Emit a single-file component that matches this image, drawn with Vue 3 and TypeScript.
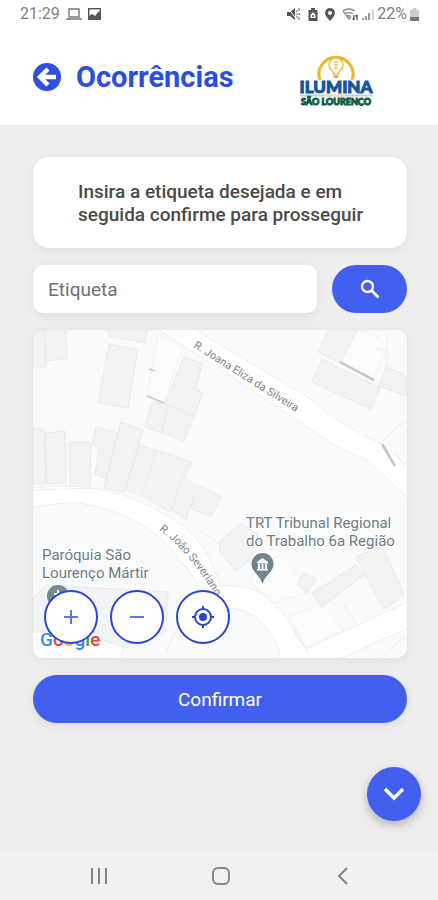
<script setup lang="ts">
import { ref } from 'vue'

const tag = ref('')

const buildings: string[] = [
  '33,330 44,330 46,367 33,367',
  '44,330 66,330 67,358 46,361',
  '108,330 147,330 145,343 109,336',
  '109,344 138,350 128,408 98,403',
  '184,357 202,364 196,389 203,393 194,416 165,404',
  '152,402 168,405 162,433 145,427',
  '168,405 194,416 184,441 162,433',
  '33,428 44,430 46,484 33,484',
  '45,433 65,431 66,483 47,484',
  '69,442 91,442 90,490 70,487',
  '96,427 118,433 106,478 95,474 99,450 92,444',
  '121,422 143,430 124,492 104,488',
  '139,445 156,450 146,497 126,490',
  '157,450 192,462 170,512 142,496',
  '182,476 197,486 186,520 172,510',
  '200,486 221,497 211,517 190,508',
  '328,330 357,330 340,363 318,352',
  '322,359 380,388 371,409 312,382',
  '386,367 406,375 406,396 379,386',
  '220,541 240,524 258,534 250,560 236,571 220,552',
  '297,585 303,573 316,579 307,593',
  '312,593 356,565 364,575 322,607',
  '356,557 382,545 404,594 384,610',
  '33,598 46,585 168,592 166,630 132,648 33,640',
]

const paleBlocks: string[] = [
  '158,334 183,346 164,403 147,396',
  '358,330 386,330 387,350 372,381 340,362',
  '262,560 284,556 308,592 270,604 250,580',
  '290,616 322,603 344,630 306,648',
]
</script>

<template>
  <div class="screen">
    <header class="top">
      <div class="status">
        <div class="status-group">
          <span>21:29</span>
          <svg width="16" height="12" viewBox="0 0 16 12" fill="none" stroke="#777" stroke-width="1.4">
            <path d="M3 1h10v8H3zM0 11h16" />
          </svg>
          <svg width="13" height="12" viewBox="0 0 13 12">
            <rect x=".7" y=".7" width="11.6" height="10.6" fill="none" stroke="#555" stroke-width="1.4" />
            <path d="M1 11V8l3-2 3 2 4-5 1 2v6z" fill="#555" />
          </svg>
        </div>
        <div class="status-group right">
          <svg width="14" height="14" viewBox="0 0 14 14" fill="#555">
            <path d="M0 5h3l5-4v12L3 9H0z" />
            <path d="M1 1l9 12" stroke="#fff" stroke-width="1" />
            <path d="M10 3v2M12 1v3M10 6v2M12.500 6v2M10 9v2M12 10v3" stroke="#888" stroke-width="1.300" />
          </svg>
          <svg class="gap" width="10" height="13" viewBox="0 0 10 13">
            <path d="M3 0h4v2h2.500v11H.5V2H3z" fill="#555" />
            <path d="M5 4l2.500 3v3h-5V7z" fill="#fff" />
            <circle cx="5" cy="8" r="1" fill="#555" />
          </svg>
          <svg class="gap" width="10" height="13" viewBox="0 0 10 13">
            <path d="M5 0a5 5 0 0 1 5 5c0 3-5 8-5 8S0 8 0 5a5 5 0 0 1 5-5z" fill="#555" />
            <circle cx="5" cy="5" r="2" fill="#fff" />
          </svg>
          <svg class="gap" width="17" height="13" viewBox="0 0 17 13" fill="none" stroke="#888" stroke-width="1.300">
            <path d="M1 3q6-4 12 0M3 6q4-3 8 0M5 8.500q2-1.500 4 0M1 3l6 8 2-2" />
            <path d="M12 7v5M10.500 10.500L12 12M15 12V7M13.500 8.500L15 7" stroke="#555" />
          </svg>
          <svg width="12" height="13" viewBox="0 0 12 13" stroke-width="1.500">
            <path d="M1 10v2M4 8v4M7 5v7" stroke="#777" />
            <path d="M11 1v11" stroke="#ccc" />
          </svg>
          <span class="battery">22%</span>
          <svg width="9" height="13" viewBox="0 0 9 13">
            <path d="M2.500 0h4v2H9v11H0V2h2.500z" fill="#ccc" />
            <path d="M0 9h9v4H0z" fill="#777" />
          </svg>
        </div>
      </div>
      <div class="title-row">
        <button class="back" type="button" aria-label="Voltar">
          <svg width="28" height="28" viewBox="0 0 28 28">
            <circle cx="14" cy="14" r="14" fill="#2d4fe3" />
            <path d="M15 6l-8 8 8 8M8 14h15" fill="none" stroke="#fff" stroke-width="4.400" />
          </svg>
        </button>
        <h1>Ocorrências</h1>
        <svg class="logo" width="76" height="58" viewBox="0 0 76 58">
          <path d="M22 32a17 17 0 1 1 32 0" fill="none" stroke="#edb52b" stroke-width="3" />
          <path d="M36 27c0-4-5-5-5-10a7 7 0 0 1 14 0c0 5-5 6-5 10z" fill="#fffdf3" stroke="#e6be57" stroke-width="1.500" />
          <path d="M36 29h4" stroke="#d9a52e" stroke-width="2" />
          <path d="M36.500 14h3M36.500 17h3M36.500 20h3" stroke="#dcae3a" stroke-width="1.500" />
          <text x="38" y="45" text-anchor="middle" class="logo-main">ILUMINA</text>
          <path d="M2 47.500h72" stroke="#b8d4dc" stroke-width="2" />
          <path d="M26 47.500h22" stroke="#eadf9b" stroke-width="2" />
          <text x="38" y="57" text-anchor="middle" class="logo-sub">SÃO LOURENÇO</text>
        </svg>
      </div>
    </header>

    <main class="content">
      <p class="message">Insira a etiqueta desejada e em seguida confirme para prosseguir</p>

      <form class="search" @submit.prevent>
        <input v-model="tag" type="text" placeholder="Etiqueta" aria-label="Etiqueta" />
        <button class="primary find" type="submit" aria-label="Buscar">
          <svg width="20" height="20" viewBox="0 0 20 20" fill="none" stroke="#fff">
            <circle cx="7.500" cy="7.500" r="5.500" stroke-width="2.300" />
            <path d="M11.500 11.500l7 7" stroke-width="2.800" />
          </svg>
        </button>
      </form>

      <section class="map" aria-label="Mapa">
        <svg class="map-art" viewBox="33 330 374 328" preserveAspectRatio="xMidYMid slice">
          <rect x="33" y="330" width="374" height="328" fill="#f9fafb" />
          <g class="pale">
            <polygon v-for="p in paleBlocks" :key="p" :points="p" />
          </g>
          <g class="building">
            <polygon v-for="p in buildings" :key="p" :points="p" />
          </g>
          <g class="road">
            <path d="M158 329L184 346L220 369L300 422Q336 449 366 459L412 502V470L380 443Q340 425 313 401Q299 391 220 345L194 329z" />
            <path d="M32 488Q78 482 120 494Q154 505 185 527Q207 545 221 586Q258 583 276 606C292 621 294 637 306 649L410 601V627L340 659H280Q279 637 256 617Q235 604 213 609Q204 590 177 556Q145 514 80 503Q56 502 32 508z" />
            <path d="M32 632Q78 632 124 647L120 659H32z" />
          </g>
          <g class="line">
            <path d="M380 443l15-14 12-8M395 450l12 22M362 330l18 9M376 348l12 4-2 20M33 490l58-2M250 583l24 20M294 628l14 25M380 659l10-10 16-12M344 605l14 22M166 652l10-22M200 530l20 15" />
          </g>
          <path d="M340 362l34 18M382 444l13 22" stroke="#c3c5c6" stroke-width="2.500" />
          <path d="M147 396l17 7M149 369l6 2" stroke="#c9cccc" stroke-width="1.500" />

          <path id="street-joana" d="M193 347L310 421" fill="none" />
          <path id="street-joao" d="M159 530Q191 552 222 607" fill="none" />
          <text class="street"><textPath href="#street-joana">R. Joana Eliza da Silveira</textPath></text>
          <text class="street"><textPath href="#street-joao">R. João Severiano</textPath></text>

          <g class="place">
            <text x="42" y="560">Paróquia São</text>
            <text x="42" y="578">Lourenço Mártir</text>
            <text x="246" y="528">TRT Tribunal Regional</text>
            <text x="246" y="546">do Trabalho 6a Região</text>
          </g>
          <circle cx="58" cy="596" r="11" fill="#768990" />
          <path d="M58 590v10M54 594h8" stroke="#fff" stroke-width="2" />
          <path d="M262.500 553a11 11 0 0 1 11 11c0 8-8 10-11 20c-3-10-11-12-11-20a11 11 0 0 1 11-11z" fill="#70858e" />
          <path d="M257 562l5.500-4 5.500 4v1.500h-11zM258 564h2v5h-2zM261.500 564h2v5h-2zM265 564h2v5h-2zM257 569h11v1.500h-11z" fill="#fff" />
        </svg>
        <div class="brand" aria-label="Google">
          <span class="b">G</span><span class="r">o</span><span class="y">o</span><span class="b">g</span><span class="g">l</span><span class="r">e</span>
        </div>
        <div class="controls">
          <button type="button" aria-label="Aproximar">
            <svg width="24" height="24" viewBox="0 0 24 24"><path d="M12 5v14M5 12h14" /></svg>
          </button>
          <button type="button" aria-label="Afastar">
            <svg width="24" height="24" viewBox="0 0 24 24"><path d="M5 12h14" /></svg>
          </button>
          <button type="button" aria-label="Minha localização">
            <svg class="strong" width="24" height="24" viewBox="0 0 24 24">
              <circle cx="12" cy="12" r="8" />
              <path d="M12 1v3M12 20v3M1 12h3M20 12h3" />
              <circle class="dot" cx="12" cy="12" r="4" />
            </svg>
          </button>
        </div>
      </section>

      <button class="primary confirm" type="button">Confirmar</button>

      <button class="primary fab" type="button" aria-label="Mostrar mais">
        <svg width="22" height="14" viewBox="0 0 22 14" fill="none" stroke="#fff" stroke-width="3.500">
          <path d="M2 2l9 9 9-9" />
        </svg>
      </button>
    </main>

    <nav class="system">
      <button type="button" aria-label="Recentes">
        <svg width="18" height="18" viewBox="0 0 18 18"><path d="M2 1v16M9 1v16M16 1v16" /></svg>
      </button>
      <button type="button" aria-label="Início">
        <svg width="18" height="18" viewBox="0 0 18 18"><rect x="1" y="1" width="16" height="16" rx="5" /></svg>
      </button>
      <button type="button" aria-label="Voltar">
        <svg width="18" height="18" viewBox="0 0 18 18"><path d="M13 1L5 9l8 8" /></svg>
      </button>
    </nav>
  </div>
</template>

<style>
body {
  background: #eeeeee;
}
</style>

<style scoped>
.screen {
  display: flex;
  flex-direction: column;
  min-height: 100vh;
  font-family: Roboto, 'Liberation Sans', sans-serif;
  color: #4a4a4a;
}

.screen * {
  box-sizing: border-box;
}

button {
  display: flex;
  align-items: center;
  justify-content: center;
  padding: 0;
  border: 0;
  background: none;
  font-family: inherit;
  cursor: pointer;
}

.top {
  background: #fff;
  padding-bottom: 19px;
}

.status {
  display: flex;
  justify-content: space-between;
  padding: 4px 19px 0 20px;
  font-size: 16px;
  line-height: 20px;
  color: #808080;
}

.status-group {
  display: flex;
  align-items: center;
  gap: 6px;
}

.status-group.right {
  gap: 3px;
}

.gap {
  margin-left: 4px;
}

.title-row {
  display: flex;
  align-items: center;
  padding: 24px 64px 0 33px;
}

.back {
  margin-right: 15px;
}

.title-row h1 {
  margin: 0;
  font-size: 29px;
  line-height: 32px;
  font-weight: 700;
  color: #2b4de0;
}

.logo {
  margin-left: auto;
}

.logo-main {
  font: 900 17px Lato, sans-serif;
  fill: #16559a;
  stroke: #16559a;
  stroke-width: 1px;
}

.logo-sub {
  font: 900 9px Lato, sans-serif;
  fill: #175c42;
  stroke: #175c42;
  stroke-width: 1px;
}

.content {
  flex: 1;
  display: flex;
  flex-direction: column;
  gap: 17px;
  padding: 32px 31px 29px 33px;
}

.message {
  margin: 0;
  padding: 23px 40px 22px 45px;
  border-radius: 16px;
  background: #fff;
  box-shadow: 0 2px 8px #00000010;
  font-size: 19px;
  line-height: 23px;
  font-weight: 500;
}

.search {
  display: flex;
  gap: 15px;
}

.search input {
  flex: 1;
  min-width: 0;
  height: 48px;
  padding: 0 15px;
  border: 0;
  border-radius: 10px;
  background: #fff;
  box-shadow: 0 2px 8px #00000010;
  font-family: inherit;
  font-size: 19px;
  color: #4a4a4a;
}

.search input::placeholder {
  color: #707070;
  opacity: 1;
}

.primary {
  background: #425fed;
  color: #fff;
}

.find {
  width: 75px;
  height: 48px;
  border-radius: 24px;
}

.map {
  position: relative;
  height: 328px;
  border-radius: 10px;
  overflow: hidden;
  box-shadow: 0 2px 8px #00000010;
}

.map-art {
  display: block;
  width: 100%;
  height: 100%;
}

.building polygon {
  fill: #f2f3f5;
  stroke: #e9eaec;
  stroke-width: 1;
}

.pale polygon {
  fill: #fbfcfa;
  stroke: #f0f2f0;
  stroke-width: 1;
}

.road path {
  fill: #fff;
  stroke: #eceeee;
  stroke-width: 1;
}

.line path {
  fill: none;
  stroke: #eceeed;
  stroke-width: 1;
}

.street {
  font-size: 11px;
  fill: #808486;
}

.place text {
  font-size: 15px;
  fill: #6b7c82;
  stroke: #fff;
  stroke-width: 2px;
  paint-order: stroke;
}

.brand {
  position: absolute;
  left: 7px;
  bottom: 6px;
  display: flex;
  font-size: 19px;
  line-height: 24px;
  font-weight: 500;
}

.b {
  color: #4285f4;
}

.r {
  color: #e94335;
}

.y {
  color: #fbbc05;
}

.g {
  color: #34a853;
}

.controls {
  position: absolute;
  left: 11px;
  bottom: 14px;
  display: flex;
  gap: 12px;
}

.controls button {
  width: 54px;
  height: 54px;
  border: 2px solid #2d45cc;
  border-radius: 50%;
  background: #fff;
}

.controls svg {
  fill: none;
  stroke: #6075d8;
  stroke-width: 2;
}

.controls .strong {
  stroke: #2d45cc;
}

.controls .dot {
  fill: #2d45cc;
  stroke: none;
}

.confirm {
  height: 48px;
  border-radius: 24px;
  box-shadow: 0 2px 8px #00000018;
  font-size: 19px;
}

.fab {
  align-self: flex-end;
  width: 54px;
  height: 54px;
  margin: auto -14px 0 0;
  border-radius: 50%;
  box-shadow: 0 4px 10px #00000040;
}

.system {
  display: flex;
  justify-content: space-around;
  align-items: center;
  height: 50px;
  padding: 2px 34px 0 38px;
  background: #f1f1f1;
}

.system button {
  width: 48px;
  height: 48px;
}

.system svg {
  fill: none;
  stroke: #858585;
  stroke-width: 2;
}
</style>
